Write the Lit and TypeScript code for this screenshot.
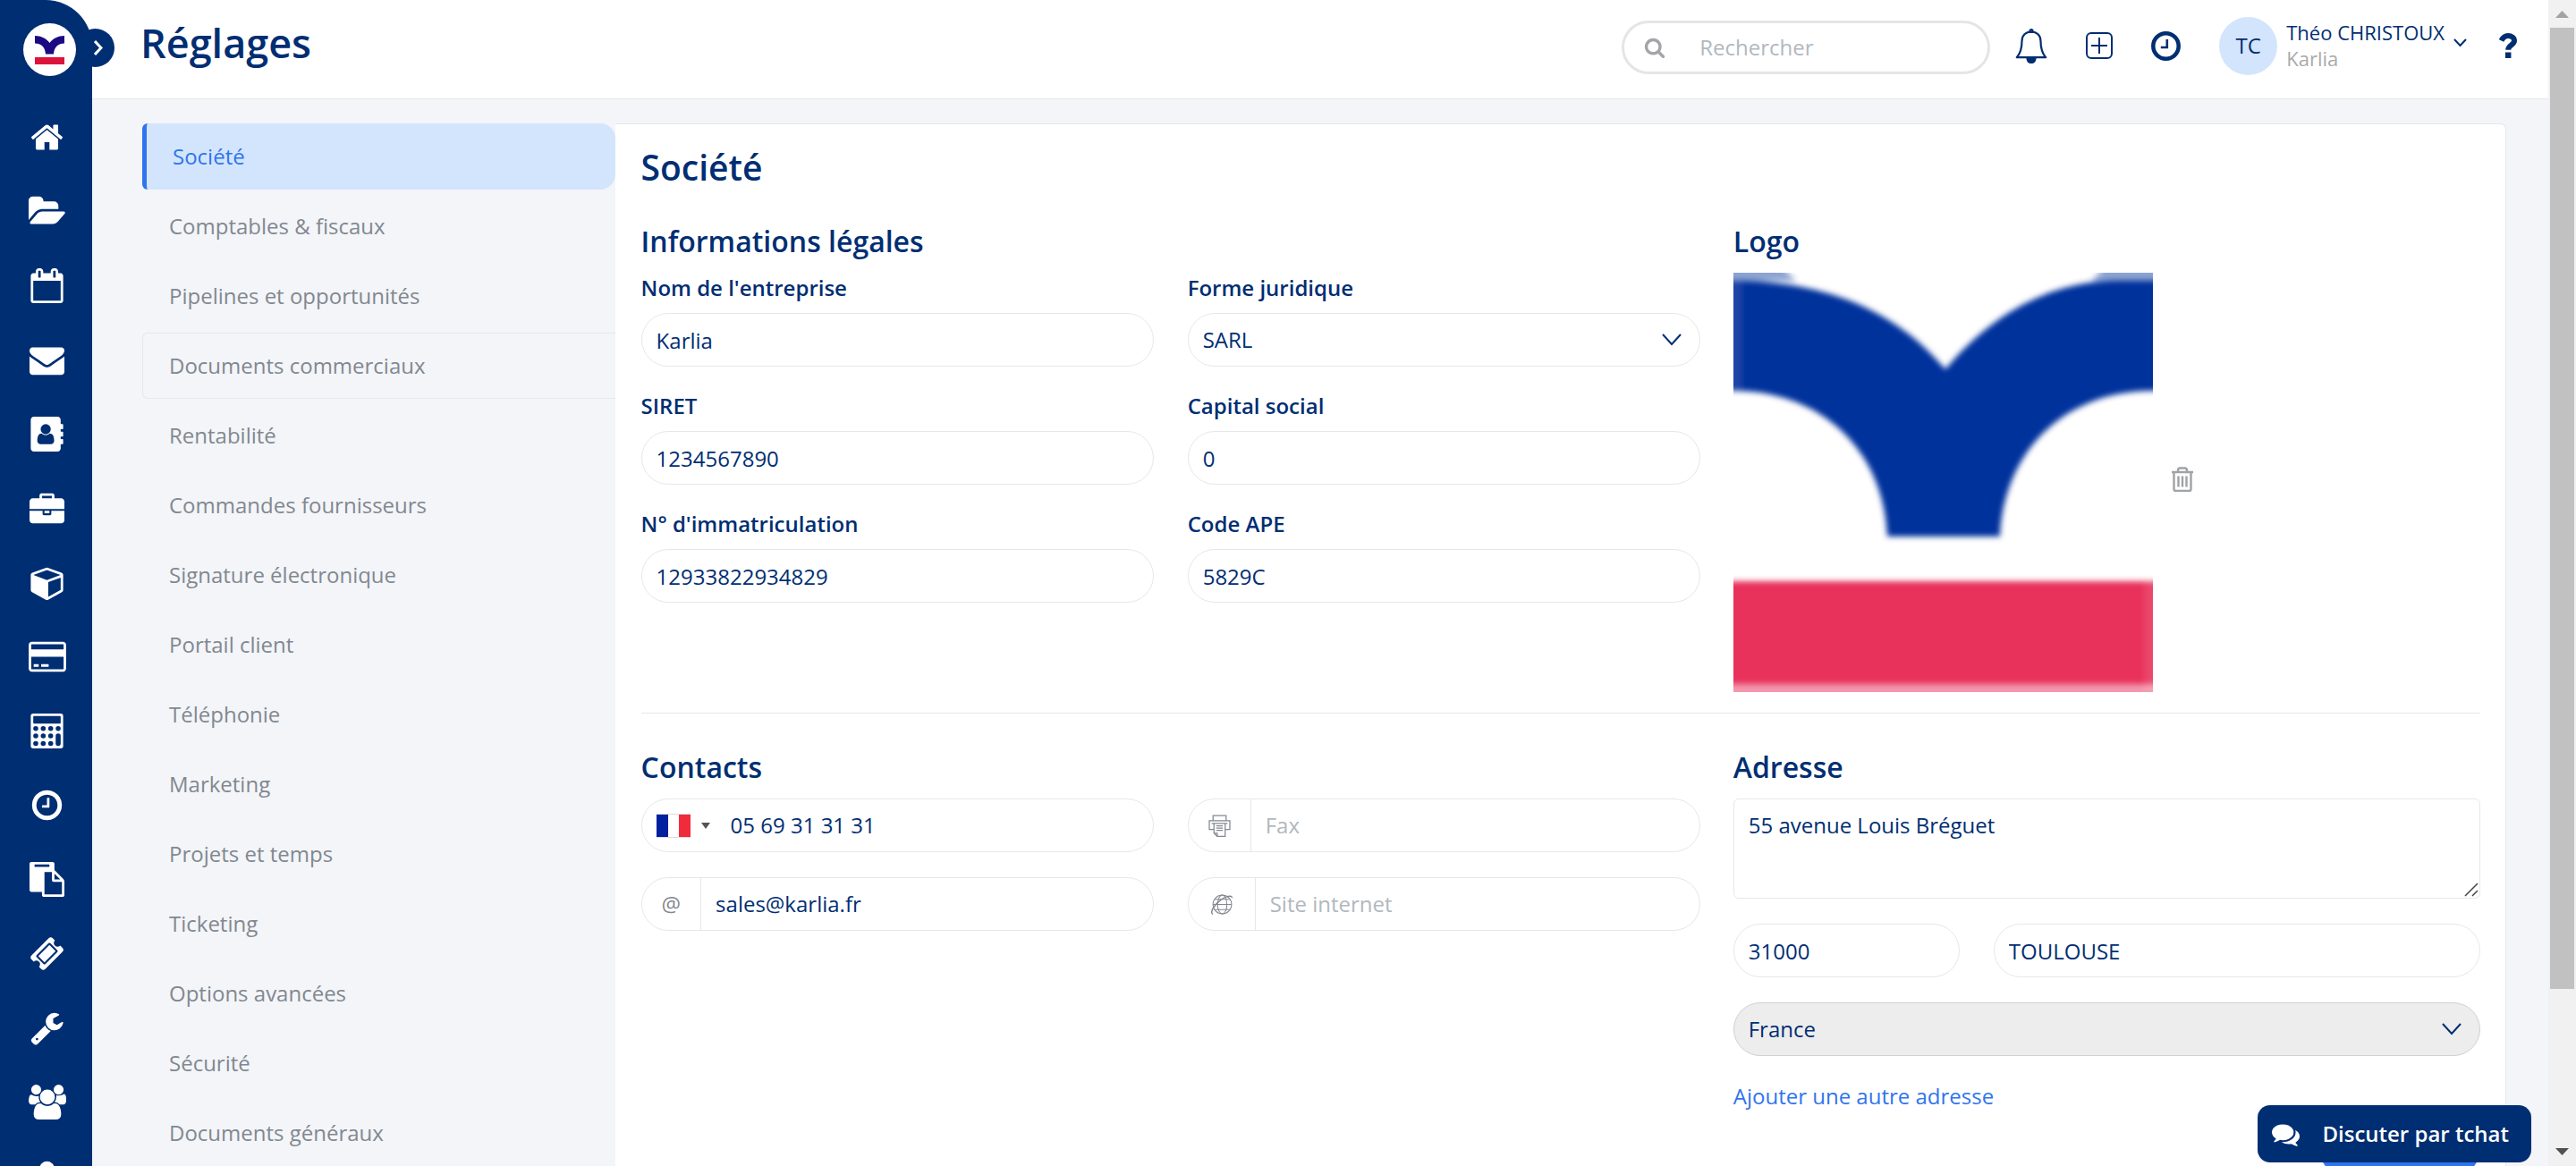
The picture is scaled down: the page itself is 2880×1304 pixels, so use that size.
import { LitElement, html, css, svg, nothing } from "lit";
import { customElement } from "lit/decorators.js";

interface NavEntry {
  label: string;
  box: string;
  wide?: boolean;
  shape: unknown;
}

const NAV: NavEntry[] = [
  {
    label: "Accueil",
    box: "0 0 1792 1792",
    shape: svg`<path d="M1472 992v480q0 26-19 45t-45 19h-384v-384h-256v384h-384q-26 0-45-19t-19-45v-480q0-1 .5-3t.5-3l575-474 575 474q1 2 1 6zm223-69l-62 74q-8 9-21 11h-3q-13 0-21-7l-692-577-692 577q-12 8-24 7-13-2-21-11l-62-74q-8-10-7-23.5t11-21.5l719-599q32-26 76-26t76 26l244 204v-195q0-14 9-23t23-9h192q14 0 23 9t9 23v408l219 182q10 8 11 21.5t-7 23.5z"/>`,
  },
  {
    label: "Dossiers",
    box: "-52 0 1920 1792",
    wide: true,
    shape: svg`<path d="M1815 952q0 31-31 66l-336 396q-43 51-120.5 86.5t-143.5 35.5h-1088q-34 0-60.5-13t-26.5-43q0-31 31-66l336-396q43-51 120.5-86.5t143.5-35.5h1088q34 0 60.5 13t26.5 43zm-343-344v160h-832q-94 0-197 47.5t-164 119.5l-337 396-5 6q0-4-.5-12.5t-.5-12.5v-960q0-92 66-158t158-66h320q92 0 158 66t66 158v32h544q92 0 158 66t66 158z"/>`,
  },
  {
    label: "Agenda",
    box: "0 0 1792 1792",
    shape: svg`<path d="M192 1664h1408v-1024h-1408v1024zm384-1216v-288q0-14-9-23t-23-9h-64q-14 0-23 9t-9 23v288q0 14 9 23t23 9h64q14 0 23-9t9-23zm768 0v-288q0-14-9-23t-23-9h-64q-14 0-23 9t-9 23v288q0 14 9 23t23 9h64q14 0 23-9t9-23zm384-64v1280q0 52-38 90t-90 38h-1408q-52 0-90-38t-38-90v-1280q0-52 38-90t90-38h128v-96q0-66 47-113t113-47h64q66 0 113 47t47 113v96h384v-96q0-66 47-113t113-47h64q66 0 113 47t47 113v96h128q52 0 90 38t38 90z"/>`,
  },
  {
    label: "E-mails",
    box: "0 0 1792 1792",
    shape: svg`<path d="M1792 710v794q0 66-47 113t-113 47h-1472q-66 0-113-47t-47-113v-794q44 49 101 87 362 246 497 345 57 42 92.5 65.5t94.5 48 110 24.5h2q51 0 110-24.5t94.5-48 92.5-65.5q170-123 498-345 57-39 100-87zm0-294q0 79-49 151t-122 123q-376 261-468 325-10 7-42.5 31t-54 38.5-52 32.5-57.5 27-50 9h-2q-23 0-50-9t-57.5-27-52-32.5-54-38.5-42.5-31q-91-64-262-182.5t-205-142.5q-62-42-117-115.5t-55-136.5q0-78 41.5-130t118.5-52h1472q65 0 112.5 47t47.5 113z"/>`,
  },
  {
    label: "Contacts",
    box: "-64 0 1792 1792",
    shape: svg`<path fill-rule="evenodd" d="M1028 644q0 107-76.5 183t-183.5 76-183.5-76-76.5-183q0-108 76.5-184t183.5-76 183.5 76 76.5 184zm-48 220q46 0 82.5 17t60 47.5 39.5 67 24 81 11.5 82.5 3.5 79q0 67-39.5 118.5t-105.5 51.5h-576q-66 0-105.5-51.5t-39.5-118.5q0-48 4.5-93.5t18.5-98.5 36.5-91.5 63-64.5 93.5-26h5q7 4 32 19.5t35.5 21 33 17 37 16 35 9 39.5 4.5 39.5-4.5 35-9 37-16 33-17 35.5-21 32-19.5zm684-256q0 13-9.5 22.5t-22.5 9.5h-96v128h96q13 0 22.5 9.5t9.5 22.5v192q0 13-9.5 22.5t-22.5 9.5h-96v128h96q13 0 22.5 9.5t9.5 22.5v192q0 13-9.5 22.5t-22.5 9.5h-96v224q0 66-47 113t-113 47h-1216q-66 0-113-47t-47-113v-1472q0-66 47-113t113-47h1216q66 0 113 47t47 113v224h96q13 0 22.5 9.5t9.5 22.5v192z"/>`,
  },
  {
    label: "Affaires",
    box: "0 -128 1792 1792",
    shape: svg`<path d="M640 256h512v-128h-512v128zm1152 640v480q0 66-47 113t-113 47h-1472q-66 0-113-47t-47-113v-480h672v160q0 26 19 45t45 19h320q26 0 45-19t19-45v-160h672zm-768 0v128h-256v-128h256zm768-480v384h-1792v-384q0-66 47-113t113-47h352v-160q0-40 28-68t68-28h576q40 0 68 28t28 68v160h352q66 0 113 47t47 113z"/>`,
  },
  {
    label: "Produits",
    box: "-64 0 1792 1792",
    shape: svg`<path fill-rule="evenodd" d="M896 1629l640-349v-636l-640 233v752zm-64-865l698-254-698-254-698 254zm832-252v768q0 35-18 65t-49 47l-704 384q-28 16-61 16t-61-16l-704-384q-31-17-49-47t-18-65v-768q0-40 23-73t61-47l704-256q22-8 44-8t44 8l704 256q38 14 61 47t23 73z"/>`,
  },
  {
    label: "Paiements",
    box: "0 0 1920 1792",
    wide: true,
    shape: svg`<path fill-rule="evenodd" d="M1760 128q66 0 113 47t47 113v1216q0 66-47 113t-113 47h-1600q-66 0-113-47t-47-113v-1216q0-66 47-113t113-47h1600zm-1600 128q-13 0-22.5 9.5t-9.5 22.5v224h1664v-224q0-13-9.5-22.5t-22.5-9.5h-1600zm1600 1280q13 0 22.5-9.5t9.5-22.5v-608h-1664v608q0 13 9.5 22.5t22.5 9.5h1600zm-1504-128v-128h256v128h-256zm384 0v-128h384v128h-384z"/>`,
  },
  {
    label: "Comptabilité",
    box: "-64 0 1792 1792",
    shape: svg`<rect width="1664" height="1792" rx="128"/><g class="hole"><rect x="128" y="128" width="1408" height="384" rx="40"/>${[768, 1152, 1536].map((y) => [256, 640, 1024].map((x) => svg`<circle cx=${x} cy=${y} r="128"/>`))}<circle cx="1408" cy="768" r="128"/><rect x="1280" y="1024" width="256" height="640" rx="128"/></g>`,
  },
  {
    label: "Temps",
    box: "0 0 1792 1792",
    shape: svg`<path d="M1024 544v448q0 14-9 23t-23 9h-320q-14 0-23-9t-9-23v-64q0-14 9-23t23-9h224v-352q0-14 9-23t23-9h64q14 0 23 9t9 23zm416 352q0-148-73-273t-198-198-273-73-273 73-198 198-73 273 73 273 198 198 273 73 273-73 198-198 73-273zm224 0q0 209-103 385.5t-279.5 279.5-385.5 103-385.5-103-279.5-279.5-103-385.5 103-385.5 279.5-279.5 385.5-103 385.5 103 279.5 279.5 103 385.5z"/>`,
  },
  {
    label: "Documents",
    box: "0 0 1792 1792",
    shape: svg`<path d="M768 1664h896v-640h-416q-40 0-68-28t-28-68v-416h-384v1152zm256-1440v-64q0-13-9.5-22.5t-22.5-9.5h-704q-13 0-22.5 9.5t-9.5 22.5v64q0 13 9.5 22.5t22.5 9.5h704q13 0 22.5-9.5t9.5-22.5zm256 672h299l-299-299v299zm512 128v672q0 40-28 68t-68 28h-960q-40 0-68-28t-28-68v-160h-544q-40 0-68-28t-28-68v-1344q0-40 28-68t68-28h1088q40 0 68 28t28 68v328q21 13 36 28l408 408q28 28 48 76t20 88z"/>`,
  },
  {
    label: "Tickets",
    box: "0 0 1792 1792",
    shape: svg`<path d="M1024 452l316 316-572 572-316-316zm-211 979l618-618q19-19 19-45t-19-45l-362-362q-18-18-45-18t-45 18l-618 618q-19 19-19 45t19 45l362 362q18 18 45 18t45-18zm889-637l-907 908q-37 37-90.5 37t-90.5-37l-126-126q56-56 56-136t-56-136-136-56-136 56l-125-126q-37-37-37-90.5t37-90.5l907-906q37-37 90.5-37t90.5 37l125 125q-56 56-56 136t56 136 136 56 136-56l126 125q37 37 37 90.5t-37 90.5z"/>`,
  },
  {
    label: "Outils",
    box: "0 0 1792 1792",
    shape: svg`<path d="M448 1472q0-26-19-45t-45-19-45 19-19 45 19 45 45 19 45-19 19-45zm644-420l-682 682q-37 37-90 37-52 0-91-37l-106-108q-38-36-38-90 0-53 38-91l681-681q39 98 114.5 173.5t173.5 114.5zm634-435q0 39-23 106-47 134-164.5 217.5t-258.5 83.5q-185 0-316.5-131.5t-131.5-316.5 131.5-316.5 316.5-131.5q58 0 121.5 16.5t107.5 46.5q16 11 16 28t-16 28l-293 169v224l193 107q5-3 79-48.5t135.5-81 70.5-35.5q15 0 23.5 10t8.5 25z"/>`,
  },
  {
    label: "Équipe",
    box: "64 0 1920 1792",
    wide: true,
    shape: svg`<path d="M657 896q-162 5-265 128h-134q-82 0-138-40.5t-56-118.5q0-353 124-353 6 0 43.5 21t97.5 42.5 119 21.5q67 0 133-23-5 37-5 66 0 159 93 287zm1071 637q0 120-73 189.5t-194 69.5h-874q-121 0-194-69.5t-73-189.5q0-53 3.5-103.5t14-109 26.5-108.5 43-97.5 62-81 85.5-53.5 111.5-20q10 0 43 21.5t73 48 107 48 135 21.5 135-21.5 107-48 73-48 43-21.5q61 0 111.5 20t85.5 53.5 62 81 43 97.5 26.5 108.5 14 109 3.5 103.5zm-1024-1277q0 106-75 181t-181 75-181-75-75-181 75-181 181-75 181 75 75 181zm704 384q0 159-112.5 271.5t-271.5 112.5-271.5-112.5-112.5-271.5 112.5-271.5 271.5-112.5 271.5 112.5 112.5 271.5zm576 225q0 78-56 118.5t-138 40.5h-134q-103-123-265-128 93-128 93-287 0-29-5-66 66 23 133 23 59 0 119-21.5t97.5-42.5 43.5-21q124 0 124 353zm-128-609q0 106-75 181t-181 75-181-75-75-181 75-181 181-75 181 75 75 181z"/>`,
  },
  {
    label: "Compte",
    box: "0 0 1792 1792",
    shape: svg`<circle cx="896" cy="512" r="384"/><path d="M256 1400q0-500 320-500 320 180 640 0 320 0 320 500 0 260-240 260h-800q-240 0-240-260z"/>`,
  },
];

const MENU = [
  "Société",
  "Comptables & fiscaux",
  "Pipelines et opportunités",
  "Documents commerciaux",
  "Rentabilité",
  "Commandes fournisseurs",
  "Signature électronique",
  "Portail client",
  "Téléphonie",
  "Marketing",
  "Projets et temps",
  "Ticketing",
  "Options avancées",
  "Sécurité",
  "Documents généraux",
];
const ACTIVE = "Société";
const HOVERED = "Documents commerciaux";

const LEGAL: { id: string; label: string; value: string; select?: boolean }[] = [
  { id: "nom", label: "Nom de l'entreprise", value: "Karlia" },
  { id: "forme", label: "Forme juridique", value: "SARL", select: true },
  { id: "siret", label: "SIRET", value: "1234567890" },
  { id: "capital", label: "Capital social", value: "0" },
  { id: "immat", label: "N° d'immatriculation", value: "12933822934829" },
  { id: "ape", label: "Code APE", value: "5829C" },
];

const chevron = html`<svg class="chevron" viewBox="0 0 22 14" aria-hidden="true">
  <path d="M1 1l10 11L21 1" />
</svg>`;

@customElement("app-root")
export class AppRoot extends LitElement {
  static styles = css`
    :host {
      --navy: #002e72;
      --blue: #2f74ee;
      --line: #e6e7e9;
      --page: #f3f5f9;
      display: block;
      color: var(--navy);
      font: 400 24px/34px "Open Sans", "Noto Sans", sans-serif;
    }
    * {
      box-sizing: border-box;
    }
    h1,
    h2,
    h3,
    ul {
      margin: 0;
      padding: 0;
      list-style: none;
      font-weight: 600;
    }
    button,
    input,
    select,
    textarea {
      margin: 0;
      padding: 0;
      border: 0;
      background: none;
      color: inherit;
      font: inherit;
      outline: none;
    }
    button {
      display: flex;
      align-items: center;
      cursor: pointer;
    }
    svg {
      display: block;
      flex: none;
    }
    .app {
      display: grid;
      grid-template-columns: 103px minmax(0, 1fr) 31px;
      height: 100vh;
      overflow: hidden;
      background: #fff;
    }

    /* side navigation */
    .side {
      position: relative;
      z-index: 2;
      display: flex;
      flex-direction: column;
      align-items: center;
      min-height: 0;
      padding-top: 26px;
      border-top-right-radius: 52px;
      background: var(--navy);
    }
    .brand {
      width: 59px;
      height: 59px;
      margin: 0 0 27px 7px;
      flex: none;
    }
    .brand svg {
      width: 59px;
      height: 59px;
    }
    .toggle {
      position: absolute;
      z-index: -1;
      top: 32px;
      right: -25px;
      justify-content: flex-end;
      width: 43px;
      height: 43px;
      padding-right: 13px;
      border-radius: 50%;
      background: var(--navy);
    }
    .toggle svg {
      width: 10px;
      height: 17px;
      fill: none;
      stroke: #fff;
      stroke-width: 3;
    }
    .nav {
      width: 100%;
    }
    .nav a {
      display: flex;
      align-items: center;
      justify-content: center;
      height: 83px;
      padding-left: 2px;
    }
    .glyph {
      width: 39px;
      height: 39px;
      fill: #fff;
    }
    .glyph.wide {
      width: 42px;
    }
    .hole {
      fill: var(--navy);
    }

    /* header */
    .page {
      display: flex;
      flex-direction: column;
      min-width: 0;
      min-height: 0;
      background: var(--page);
    }
    .header {
      display: flex;
      align-items: center;
      flex: none;
      height: 111px;
      padding: 0 35px 5px 54px;
      border-bottom: 1px solid var(--line);
      background: #fff;
    }
    .title {
      margin-right: auto;
      padding-bottom: 10px;
      font-size: 45px;
      line-height: 60px;
    }
    .search {
      display: flex;
      align-items: center;
      gap: 38px;
      width: 412px;
      height: 60px;
      margin-right: 28px;
      padding: 0 22px;
      border: 3px solid #e5e5e5;
      border-radius: 30px;
    }
    .search svg {
      width: 24px;
      height: 24px;
      fill: #a3a5a8;
    }
    .search input {
      width: 100%;
      min-width: 0;
    }
    ::placeholder {
      color: #b1b8be;
      opacity: 1;
    }
    .tools {
      display: flex;
      align-items: center;
      gap: 43px;
      padding-bottom: 3px;
    }
    .tools svg {
      fill: none;
      stroke: var(--navy);
    }
    .bell {
      width: 36px;
      height: 40px;
    }
    .plus {
      width: 30px;
      height: 30px;
    }
    .clock {
      width: 33px;
      height: 33px;
    }
    .user {
      gap: 10px;
      text-align: left;
    }
    .avatar {
      display: grid;
      place-items: center;
      width: 65px;
      height: 65px;
      border-radius: 50%;
      background: #d3e5fd;
      font-weight: 500;
    }
    .who {
      display: grid;
      font-size: 22px;
      line-height: 29px;
    }
    .firm {
      color: #aaa;
    }
    .user .caret {
      width: 15px;
      height: 10px;
      margin-bottom: 6px;
      stroke-width: 2;
    }
    .help {
      width: 20px;
      height: 30px;
      margin-left: -7px;
    }

    /* settings body */
    .body {
      display: grid;
      grid-template-columns: 1fr 4fr;
      flex: 1;
      min-height: 0;
      padding: 27px 47px 0 56px;
    }
    .menu {
      display: flex;
      flex-direction: column;
      gap: 4px;
    }
    .menu a {
      display: block;
      height: 74px;
      padding: 19px 29px;
      border: 1px solid transparent;
      border-right: 0;
      border-radius: 6px 0 0 6px;
      color: #82888f;
      text-decoration: none;
    }
    .menu .active {
      border: 0;
      border-left: 5px solid var(--blue);
      border-radius: 6px 17px 17px 6px;
      background: #d3e5fd;
      color: var(--blue);
      padding-top: 20px;
    }
    .menu .hovered {
      border-color: var(--line);
    }
    .panel {
      min-width: 0;
      padding: 21px 28px 0 29px;
      border: 1px solid var(--line);
      border-left: 0;
      border-bottom: 0;
      border-top-right-radius: 6px;
      background: #fff;
      background-clip: padding-box;
    }
    .panel-title {
      margin-bottom: 34px;
      font-size: 39px;
      line-height: 54px;
    }
    .section-title {
      margin-bottom: 13px;
      font-size: 32px;
      line-height: 44px;
    }
    .row {
      display: grid;
      grid-template-columns: repeat(12, minmax(0, 1fr));
      column-gap: 37px;
    }
    .row + .row {
      margin-top: 23px;
      padding-top: 38px;
      border-top: 1px solid var(--line);
    }
    .main-col {
      grid-column: span 7;
    }
    .side-col {
      grid-column: span 5;
    }
    .pair {
      display: grid;
      grid-template-columns: repeat(2, minmax(0, 1fr));
      gap: 27px 38px;
    }
    .contacts {
      row-gap: 28px;
    }
    .field {
      display: grid;
      gap: 11px;
    }
    .field label {
      font-weight: 600;
    }
    .control {
      display: grid;
      grid-template-columns: minmax(0, 1fr) auto;
      align-items: center;
    }
    .input {
      width: 100%;
      height: 60px;
      padding: 0 16px;
      border: 1px solid var(--line);
      border-radius: 30px;
      appearance: none;
    }
    .control .input {
      grid-area: 1 / 1 / 2 / 3;
    }
    .chevron {
      grid-area: 1 / 2;
      width: 22px;
      height: 14px;
      margin-right: 21px;
      fill: none;
      stroke: var(--navy);
      stroke-width: 2;
      pointer-events: none;
    }
    .group {
      display: flex;
      align-items: stretch;
      height: 60px;
      border: 1px solid var(--line);
      border-radius: 30px;
      overflow: hidden;
    }
    .group input {
      flex: 1;
      min-width: 0;
      padding: 0 16px;
    }
    .addon {
      display: flex;
      align-items: center;
      padding: 0 22px;
      border-right: 1px solid var(--line);
      color: #82888f;
    }
    .addon svg {
      width: 25px;
      height: 25px;
      fill: none;
      stroke: #82888f;
    }
    .addon .globe {
      width: 30px;
    }
    .country {
      gap: 12px;
      padding: 0 7px 0 16px;
    }
    .flag {
      width: 38px;
      height: 27px;
    }
    .drop {
      width: 10px;
      height: 7px;
      fill: #555;
    }
    .logo-line {
      display: flex;
      align-items: center;
      gap: 20px;
    }
    .logo {
      width: 469px;
      height: 469px;
    }
    .trash {
      width: 26px;
      height: 28px;
      margin-bottom: 8px;
      fill: none;
      stroke: #a0a2a5;
      stroke-width: 2.4;
    }
    .address {
      display: grid;
      grid-template-columns: repeat(3, minmax(0, 1fr));
      gap: 28px 38px;
    }
    .street {
      position: relative;
      grid-column: span 3;
    }
    .street textarea {
      display: block;
      width: 100%;
      height: 112px;
      padding: 12px 16px;
      border: 1px solid var(--line);
      border-radius: 6px;
      resize: none;
    }
    .grip {
      position: absolute;
      right: 2px;
      bottom: 2px;
      width: 16px;
      height: 16px;
      stroke: #444;
      stroke-width: 1.5;
    }
    .city {
      grid-column: span 2;
    }
    .land {
      grid-column: span 3;
    }
    .land .input {
      border-color: #d0d0d0;
      background: #ededed;
    }
    .add {
      grid-column: span 3;
      color: var(--blue);
      text-decoration: none;
    }
    .save {
      width: 180px;
      height: 60px;
      margin: 12px 0 0 auto;
      border-radius: 30px;
      background: var(--blue);
      color: #fff;
    }

    .chat {
      position: fixed;
      z-index: 3;
      right: 50px;
      bottom: 4px;
      gap: 25px;
      height: 64px;
      padding: 0 25px 0 16px;
      border-radius: 14px;
      background: var(--navy);
      color: #fff;
      font-weight: 600;
    }
    .chat svg {
      width: 31px;
      height: 31px;
      fill: #fff;
    }

    /* page scroll bar */
    .scroll {
      display: flex;
      flex-direction: column;
      align-items: center;
      padding: 12px 0;
      background: #f1f1f1;
    }
    .scroll svg {
      width: 15px;
      height: 8px;
      fill: #a3a3a3;
    }
    .scroll .down {
      margin-top: auto;
      fill: #505050;
    }
    .thumb {
      width: 27px;
      height: 84%;
      margin-top: 11px;
      background: #c1c1c1;
    }
  `;

  private renderNav() {
    return html`<aside class="side">
      <button class="toggle" aria-label="Déplier le menu">
        <svg viewBox="0 0 10 17"><path d="M1 1l7 7.500-7 7.500" /></svg>
      </button>
      <a class="brand" href="#" aria-label="Karlia">
        <svg viewBox="0 0 59 59">
          <circle cx="29.500" cy="29.500" r="29.500" fill="#fff" />
          <path fill="#1b0a82" d="M13 14c7 0 13 3 16.500 8 3.500-5 9.500-8 16.500-8v8.500c-7 0-11.500 4-12 12h-9c-.5-8-5-12-12-12z" />
          <path fill="#dc143c" d="M13 38h33v8H13z" />
        </svg>
      </a>
      <nav class="nav" aria-label="Navigation principale">
        <ul>
          ${NAV.map(
            (n) => html`<li>
              <a href="#" aria-label=${n.label}>
                <svg class="glyph ${n.wide ? "wide" : ""}" viewBox=${n.box}>${n.shape}</svg>
              </a>
            </li>`
          )}
        </ul>
      </nav>
    </aside>`;
  }

  private renderHeader() {
    return html`<header class="header">
      <h1 class="title">Réglages</h1>
      <label class="search">
        <svg viewBox="0 0 1792 1792" aria-hidden="true">
          <path d="M1216 832q0-185-131.500-316.500t-316.500-131.500-316.500 131.500-131.500 316.500 131.500 316.500 316.500 131.500 316.500-131.500 131.500-316.500zm512 832q0 52-38 90t-90 38q-54 0-90-38l-343-342q-179 124-399 124-143 0-273.500-55.500t-225-150-150-225-55.500-273.500 55.500-273.500 150-225 225-150 273.500-55.500 273.500 55.500 225 150 150 225 55.500 273.500q0 220-124 399l343 343q37 37 37 90z" />
        </svg>
        <input type="search" placeholder="Rechercher" aria-label="Rechercher" />
      </label>
      <div class="tools">
        <button aria-label="Notifications">
          <svg class="bell" viewBox="0 0 36 40" stroke-width="2.200" stroke-linejoin="round">
            <path d="M18 4.500c-6 0-10.500 4-10.500 10.500C7.500 24 5.500 29 1.800 33.200h32.400C30.500 29 28.500 24 28.500 15 28.500 8.500 24 4.500 18 4.500z" />
            <circle cx="18" cy="3.500" r="1.500" />
            <path d="M13.500 34.500c.5 3 2.300 4.500 4.500 4.500s4-1.500 4.500-4.500z" fill="#002e72" />
          </svg>
        </button>
        <button aria-label="Ajouter">
          <svg class="plus" viewBox="0 0 30 30" stroke-width="2">
            <rect x="1" y="1" width="28" height="28" rx="5" />
            <path d="M15 6v18M6 15h18" />
          </svg>
        </button>
        <button aria-label="Historique">
          <svg class="clock" viewBox="0 0 33 33">
            <circle cx="16.500" cy="16.500" r="14.200" stroke-width="4.500" />
            <path d="M17.800 9v9h-7" stroke-width="2.600" />
          </svg>
        </button>
        <button class="user">
          <span class="avatar">TC</span>
          <span class="who"><span>Théo CHRISTOUX</span><span class="firm">Karlia</span></span>
          <svg class="caret" viewBox="0 0 15 10"><path d="M1 1l6.500 7L14 1" /></svg>
        </button>
        <button class="help" aria-label="Aide">
          <svg viewBox="0 0 20 28" width="20" height="28">
            <path d="M2.500 8.500C4.500 4.500 7 3 10 3c4 0 7 2.300 7 5.500 0 5-6.800 4.700-6.800 10.200" stroke-width="6" />
            <path d="M10.200 21.500v6.500" stroke-width="6.500" />
          </svg>
        </button>
      </div>
    </header>`;
  }

  private renderLogo() {
    return html`<svg class="logo" viewBox="0 0 469 469" role="img" aria-label="Logo Karlia">
      <defs>
        <filter id="soft" x="-5%" y="-5%" width="110%" height="110%">
          <feGaussianBlur stdDeviation="3" />
        </filter>
      </defs>
      <g filter="url(#soft)">
        <path fill="#00309c" d="M-20 9H0c100 0 180 31 237 99C285 50 350 9 430 9h59v123h-20c-99 0-167 68-171 163H172C168 200 100 132 0 132h-20z" />
        <path fill="#e8325b" d="M-20 345h509v115H-20z" />
        <path fill="#00309c" fill-opacity=".45" d="M-20-20h60L70 9h-90zM430-20h59V9h-89z" />
        <path fill="#e8325b" fill-opacity=".5" d="M-20 460h509v29H-20z" />
        <path fill="#fff" fill-opacity=".1" d="M-20 9H9v123h-29zM460 345h29v124h-29z" />
      </g>
    </svg>`;
  }

  private renderLegal() {
    return html`<section class="row">
      <div class="main-col">
        <h3 class="section-title">Informations légales</h3>
        <div class="pair">
          ${LEGAL.map(
            (f) => html`<div class="field">
              <label for=${f.id}>${f.label}</label>
              ${f.select
                ? html`<div class="control">
                    <select class="input" id=${f.id}>
                      <option>${f.value}</option>
                    </select>
                    ${chevron}
                  </div>`
                : html`<input class="input" id=${f.id} .value=${f.value} />`}
            </div>`
          )}
        </div>
      </div>
      <div class="side-col">
        <h3 class="section-title">Logo</h3>
        <div class="logo-line">
          ${this.renderLogo()}
          <button aria-label="Supprimer le logo">
            <svg class="trash" viewBox="0 0 26 28">
              <path d="M1 6h24M3.500 6v19a2 2 0 0 0 2 2h15a2 2 0 0 0 2-2V6M8 6V4a2.500 2.500 0 0 1 2.500-2.500h5A2.500 2.500 0 0 1 18 4v2M8.500 10.500v12M13 10.500v12M17.500 10.500v12" />
            </svg>
          </button>
        </div>
      </div>
    </section>`;
  }

  private renderContacts() {
    return html`<section class="row">
      <div class="main-col">
        <h3 class="section-title">Contacts</h3>
        <div class="pair contacts">
          <div class="group">
            <button class="country" aria-label="Indicatif : France">
              <svg class="flag" viewBox="0 0 38 27">
                <path fill="#00209f" d="M0 1h13v26H0z" />
                <path fill="#fff" d="M13 1h12v26H13z" />
                <path fill="#ef2b3c" d="M25 1h13v26H25z" />
                <path stroke="#ddd" d="M0 .5h38M0 26.500h38" />
              </svg>
              <svg class="drop" viewBox="0 0 10 7"><path d="M0 0h10L5 7z" /></svg>
            </button>
            <input type="tel" aria-label="Téléphone" value="05 69 31 31 31" />
          </div>
          <div class="group">
            <span class="addon">
              <svg viewBox="0 0 24 24" stroke-width="1.200">
                <path d="M5 6V1h14v5M6 16H1V6.500h22V16h-5M3.500 9.500h17M6 9.500V20l3.500 3.500H18v-14M6 20h3.500v3.500M8.500 12h7M8.500 14.500h7M8.500 17h7" />
              </svg>
            </span>
            <input type="tel" aria-label="Fax" placeholder="Fax" />
          </div>
          <div class="group">
            <span class="addon">@</span>
            <input type="email" aria-label="E-mail" value="sales@karlia.fr" />
          </div>
          <div class="group">
            <span class="addon">
              <svg class="globe" viewBox="-2 0 28 24" stroke-width="1">
                <circle cx="12.500" cy="12" r="10" />
                <ellipse cx="12.500" cy="12" rx="5" ry="10" />
                <path d="M2.500 12h20M4.500 6.500h16M4.500 17.500h16" />
                <path d="M2.500 22.500C-1.500 21 4 12 11 7c5-3.800 12-5.500 12-2" stroke-width="1.400" />
              </svg>
            </span>
            <input type="url" aria-label="Site internet" placeholder="Site internet" />
          </div>
        </div>
      </div>
      <div class="side-col">
        <h3 class="section-title">Adresse</h3>
        <div class="address">
          <div class="street">
            <textarea aria-label="Rue" .value=${"55 avenue Louis Bréguet"}></textarea>
            <svg class="grip" viewBox="0 0 16 16" aria-hidden="true"><path d="M1 15L15 1M9 15l6-6" /></svg>
          </div>
          <input class="input" aria-label="Code postal" value="31000" />
          <input class="input city" aria-label="Ville" value="TOULOUSE" />
          <div class="control land">
            <select class="input" aria-label="Pays">
              <option>France</option>
            </select>
            ${chevron}
          </div>
          <a class="add" href="#">Ajouter une autre adresse</a>
        </div>
        <button class="save" aria-label="Enregistrer"></button>
      </div>
    </section>`;
  }

  render() {
    return html`<div class="app">
      ${this.renderNav()}
      <div class="page">
        ${this.renderHeader()}
        <div class="body">
          <nav class="menu" aria-label="Réglages">
            ${MENU.map(
              (m) => html`<a
                href="#"
                class=${m === ACTIVE ? "active" : m === HOVERED ? "hovered" : ""}
                aria-current=${m === ACTIVE ? "page" : nothing}
                >${m}</a
              >`
            )}
          </nav>
          <main class="panel">
            <h2 class="panel-title">Société</h2>
            ${this.renderLegal()} ${this.renderContacts()}
          </main>
        </div>
      </div>
      <div class="scroll" aria-hidden="true">
        <svg viewBox="0 0 15 8"><path d="M0 8h15L7.500 0z" /></svg>
        <div class="thumb"></div>
        <svg class="down" viewBox="0 0 15 8"><path d="M0 0h15L7.500 8z" /></svg>
      </div>
      <button class="chat">
        <svg viewBox="0 0 1792 1792" aria-hidden="true">
          <path d="M1408 768q0 139-94 257t-256.500 186.500-353.500 68.500q-86 0-176-16-124 88-278 128-36 9-86 16h-3q-11 0-20.500-8t-11.500-21q-1-3-1-6.500t.5-6.500 2-6l2.500-5 3.500-5.500 4-5 4.500-5 4-4.500q5-6 23-25t26-29.500 22.500-29 25-38.500 20.500-44q-124-72-195-177t-71-224q0-139 94-257t256.500-186.500 353.500-68.500 353.500 68.500 256.500 186.500 94 257zm384 256q0 120-71 224.500t-195 176.500q10 24 20.500 44t25 38.500 22.500 29 26 29.500 23 25q1 1 4 4.500t4.500 5 4 5 3.500 5.500l2.500 5 2 6 .5 6.500-1 6.500q-3 14-13 22t-22 7q-50-7-86-16-154-40-278-128-90 16-176 16-271 0-472-132 58 4 88 4 161 0 309-45t264-129q125-92 192-212t67-254q0-77-23-152 129 71 204 178t75 230z" />
        </svg>
        Discuter par tchat
      </button>
    </div>`;
  }
}
